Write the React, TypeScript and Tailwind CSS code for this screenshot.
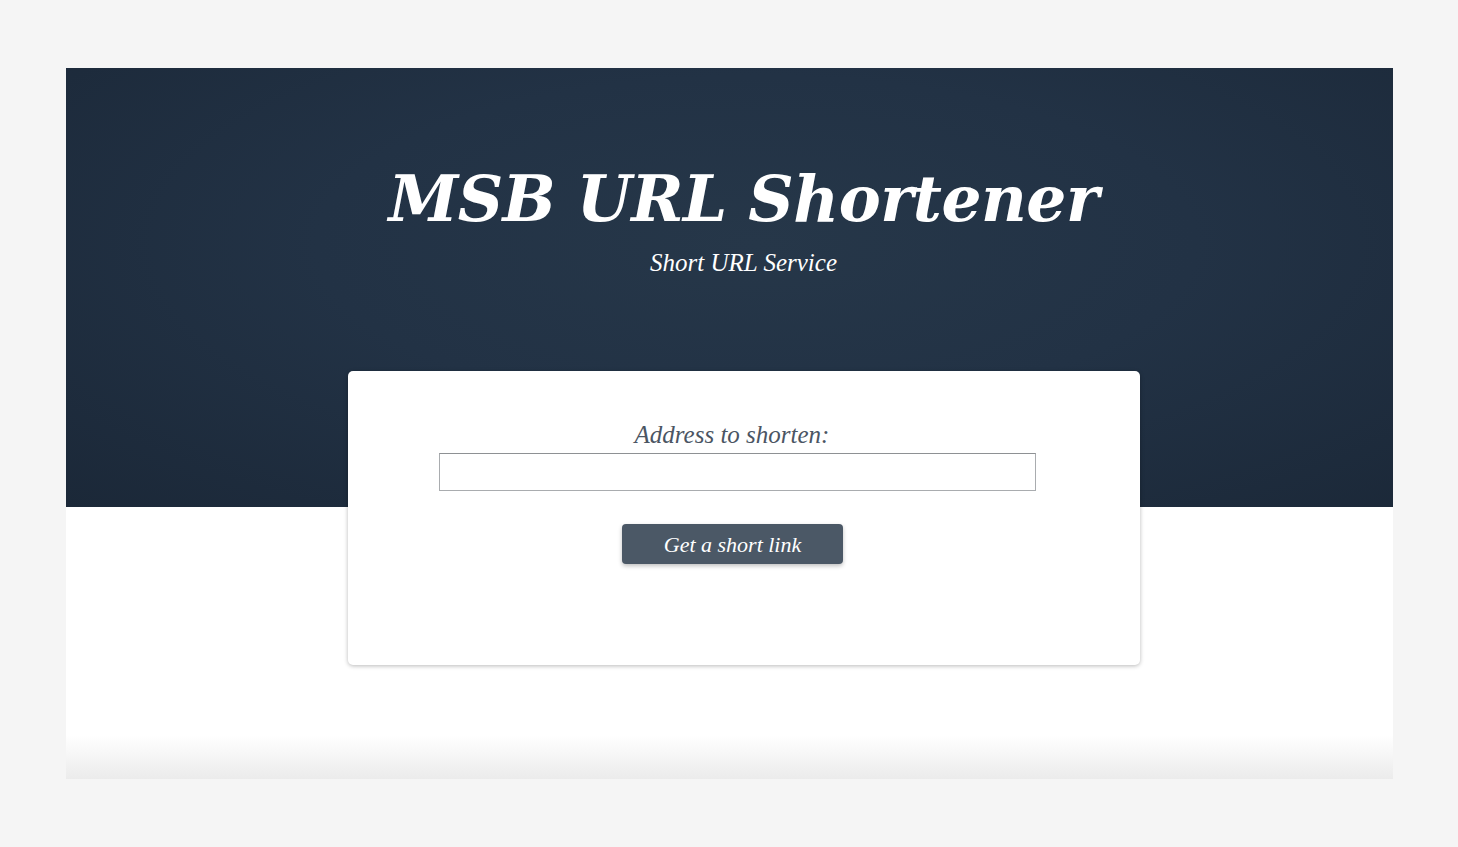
export default function App() {
  return (
    <div className="min-h-screen bg-[#f5f5f5] pt-[68px] pl-[66px] font-['Liberation_Serif',Georgia,serif]">
      <div className="w-[1327px]">
        <header className="h-[439px] bg-[radial-gradient(ellipse_at_52%_40%,#263749_0%,#223245_45%,#1b2838_100%)] pt-[89px] pl-[28px] text-center text-white">
          <h1 className="font-['DejaVu_Serif',Georgia,serif] text-[63px] leading-[84px] font-bold italic tracking-[-0.5px]">
            MSB URL Shortener
          </h1>
          <p className="mt-[7px] text-[25px] leading-[30px] italic">Short URL Service</p>
        </header>

        <section className="flow-root h-[272px] bg-[linear-gradient(to_bottom,#ffffff_0%,#ffffff_84%,#ebebeb_100%)]">
          <div className="-mt-[136px] ml-[282px] w-[792px] h-[294px] rounded-[5px] bg-white shadow-[0_1px_4px_rgba(0,0,0,0.28)] pt-[48px] flex flex-col">
            <label className="pr-[24px] text-center text-[25px] leading-[32px] italic text-[#4b5563]">
              Address to shorten:
            </label>
            <input
              type="text"
              className="mt-[2px] ml-[91px] w-[597px] h-[38px] border border-[#a9acaf] border-t-[#8e9194] bg-white outline-none"
            />
            <button className="mt-[33px] ml-[274px] w-[221px] h-[40px] rounded-[4px] bg-[#4b5866] text-white text-[22px] italic shadow-[0_2px_4px_rgba(0,0,0,0.25)]">
              Get a short link
            </button>
          </div>
        </section>
      </div>
    </div>
  );
}
